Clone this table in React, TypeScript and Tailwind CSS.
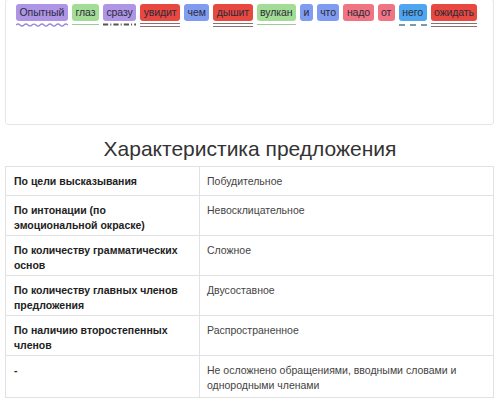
const words = [
  { t: "Опытный", bg: "bg-[#ae95e6]", u: "wave" },
  { t: "глаз", bg: "bg-[#a3dd95]", u: "single" },
  { t: "сразу", bg: "bg-[#ae95e6]", u: "dashdot" },
  { t: "увидит", bg: "bg-[#e8483f]", u: "double" },
  { t: "чем", bg: "bg-[#7f9cf0]", u: "" },
  { t: "дышит", bg: "bg-[#e8483f]", u: "double" },
  { t: "вулкан", bg: "bg-[#a3dd95]", u: "single" },
  { t: "и", bg: "bg-[#7f9cf0]", u: "" },
  { t: "что", bg: "bg-[#7f9cf0]", u: "" },
  { t: "надо", bg: "bg-[#f07483]", u: "" },
  { t: "от", bg: "bg-[#f07483]", u: "" },
  { t: "него", bg: "bg-[#4ea6f0]", u: "dashed" },
  { t: "ожидать", bg: "bg-[#e8483f]", u: "double" },
];

const rows = [
  ["По цели высказывания", "Побудительное"],
  ["По интонации (по эмоциональной окраске)", "Невосклицательное"],
  ["По количеству грамматических основ", "Сложное"],
  ["По количеству главных членов предложения", "Двусоставное"],
  ["По наличию второстепенных членов", "Распространенное"],
  ["-", "Не осложнено обращениями, вводными словами и однородными членами"],
];

const Underline = ({ kind }: { kind: string }) => {
  if (kind === "wave")
    return (
      <svg className="w-full h-[4px] mt-[2px]" preserveAspectRatio="none" viewBox="0 0 52 4">
        <path
          d="M0 2 Q2 0 4 2 T8 2 T12 2 T16 2 T20 2 T24 2 T28 2 T32 2 T36 2 T40 2 T44 2 T48 2 T52 2"
          fill="none"
          stroke="#9b87d6"
          strokeWidth="1.2"
        />
      </svg>
    );
  if (kind === "single") return <div className="mt-[3px] h-[1px] w-full bg-[#9cc99a]" />;
  if (kind === "double")
    return <div className="mt-[2px] w-full h-[4px] border-t border-b border-[#8a6f6f]" />;
  if (kind === "dashed")
    return <div className="mt-[3px] w-full border-t-2 border-dashed border-[#7a9ab0]" />;
  if (kind === "dashdot")
    return (
      <svg className="w-full h-[3px] mt-[2px]" preserveAspectRatio="none" viewBox="0 0 32 3">
        <path d="M0 1.5 H5 M7 1.5 H8 M10 1.5 H15 M17 1.5 H18 M20 1.5 H25 M27 1.5 H28 M30 1.5 H32" stroke="#555" strokeWidth="2" />
      </svg>
    );
  return <div className="h-[4px]" />;
};

export default function App() {
  return (
    <div className="w-[500px] h-[404px] overflow-hidden bg-white font-['Liberation_Sans',Arial,sans-serif] text-[#333]">
      {/* sentence card */}
      <div className="mx-[5px] w-[489px] h-[126px] -mt-px border border-[#e6e6e6] rounded-[3px] pl-[10px] pt-[4px]">
        <div className="flex gap-[4px]">
          {words.map((w, i) => (
            <div key={i} className="flex flex-col">
              <span className={`${w.bg} rounded-[3px] px-[3.5px] h-[17px] leading-[17px] text-[10.5px] tracking-[-0.1px] text-[#2b2b3a]`}>
                {w.t}
              </span>
              <Underline kind={w.u} />
            </div>
          ))}
        </div>
      </div>

      <h2 className="text-center text-[21px] leading-[24px] mt-[12px] mb-[5px] text-[#333]">
        Характеристика предложения
      </h2>

      <table className="ml-[5px] w-[489px] border-collapse text-[10.5px] leading-[15px]">
        <tbody>
          {rows.map(([a, b], i) => (
            <tr key={i} className={i === 0 ? "h-[29px]" : i === 5 ? "h-[42px]" : "h-[40px]"}>
              <td className="w-[194px] align-top border border-[#e2e2e2] pl-[8px] pr-[12px] pt-[7px] font-bold text-[#222]">
                {a}
              </td>
              <td className="align-top border border-[#e2e2e2] px-[7px] pt-[7px] text-[#444]">{b}</td>
            </tr>
          ))}
        </tbody>
      </table>
    </div>
  );
}
